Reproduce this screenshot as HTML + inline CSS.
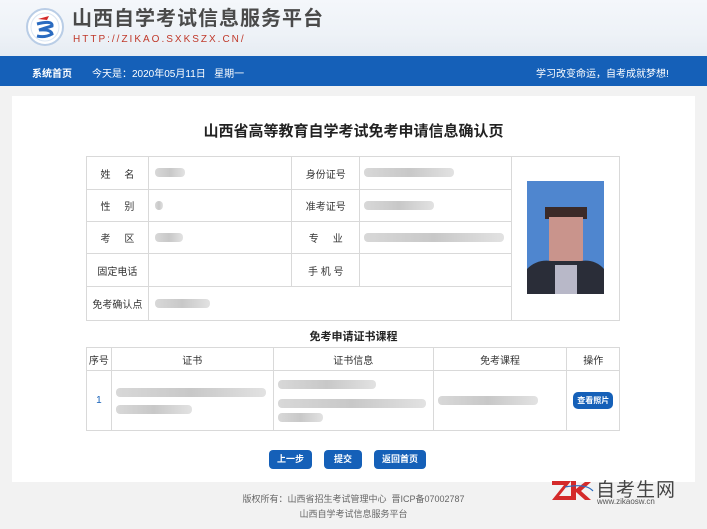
<!DOCTYPE html>
<html><head><meta charset="utf-8"><style>
*{margin:0;padding:0;box-sizing:border-box}
body{width:707px;height:529px;background:#f2f2f2;font-family:"Liberation Sans","Noto Sans CJK SC",sans-serif;position:relative;overflow:hidden;color:#333}
.hdr{position:absolute;left:0;top:0;width:707px;height:56px;background:linear-gradient(180deg,#f4f7fb 0%,#eef2f7 60%,#e6ecf3 100%)}
.nav{position:absolute;left:0;top:56px;width:707px;height:30px;background:#1560b8;color:#fff;font-size:10px}
.panel{position:absolute;left:12px;top:96px;width:683px;height:386px;background:#fff}
.abs{position:absolute}
table{border-collapse:collapse;position:absolute;font-size:10px}
td,th{border:1px solid #d9d9d9}
.lbl{text-align:center;color:#333}
.bar{display:inline-block;height:9px;background:linear-gradient(90deg,#d8d8d8,#c8c8c8,#e2e2e2);border-radius:4px;vertical-align:middle}
.btn{position:absolute;top:450px;height:19px;background:#1560b8;color:#fff;font-size:9px;font-weight:bold;border-radius:4px;text-align:center;line-height:19px}
</style></head><body>
<div class="hdr">
 <svg class="abs" style="left:25px;top:7px" width="40" height="40" viewBox="0 0 40 40">
  <circle cx="20" cy="20" r="18" fill="#fff" stroke="#b9cde6" stroke-width="2"/>
  <circle cx="20" cy="20" r="14" fill="none" stroke="#dbe6f3" stroke-width="1"/>
  <path d="M13 12 L24 9 L22 13 Z" fill="#d42a2a"/>
  <path d="M12 17 Q28 13 27 19 Q20 21 14 23 Q26 22 27 27 Q20 31 12 29" fill="none" stroke="#2a6bc0" stroke-width="3"/>
 </svg>
 <div class="abs" style="left:72px;top:9px;font-size:20px;line-height:21px;font-weight:bold;color:#4a4a4a;letter-spacing:1px">山西自学考试信息服务平台</div>
 <div class="abs" style="left:73px;top:34px;font-size:10px;line-height:11px;color:#c0392b;letter-spacing:2px">HTTP://ZIKAO.SXKSZX.CN/</div>
</div>
<div class="nav">
 <span class="abs" style="left:32px;top:9px;font-weight:bold">系统首页</span>
 <span class="abs" style="left:92px;top:9px">今天是：2020年05月11日&nbsp;&nbsp;&nbsp;星期一</span>
 <span class="abs" style="left:536px;top:9px">学习改变命运，自考成就梦想!</span>
</div>
<div class="panel"></div>
<div class="abs" style="left:0;width:707px;top:120px;text-align:center;font-size:15px;font-weight:bold;color:#222">山西省高等教育自学考试免考申请信息确认页</div>
<table style="left:86px;top:156px;width:534px">
 <tr style="height:33px"><td class="lbl" style="width:62px">姓&nbsp;&nbsp;&nbsp;&nbsp;&nbsp;名</td><td style="width:144px;padding-left:6px"><span class="bar" style="width:30px"></span></td><td class="lbl" style="width:68px">身份证号</td><td style="width:152px;padding-left:4px"><span class="bar" style="width:90px"></span></td><td rowspan="5" style="width:108px;text-align:center">
  <svg width="77" height="113" viewBox="0 0 77 113"><rect width="77" height="113" fill="#4f86cf"/><rect x="18" y="26" width="42" height="12" fill="#3b2a28"/><rect x="22" y="36" width="34" height="50" fill="#c9948c"/><path d="M0 88 Q10 78 24 80 L54 80 Q68 78 77 88 L77 113 L0 113Z" fill="#2a2d38"/><rect x="28" y="84" width="22" height="29" fill="#b8b8c8"/></svg>
 </td></tr>
 <tr style="height:32px"><td class="lbl">性&nbsp;&nbsp;&nbsp;&nbsp;&nbsp;别</td><td style="padding-left:6px"><span class="bar" style="width:8px"></span></td><td class="lbl">准考证号</td><td style="padding-left:4px"><span class="bar" style="width:70px"></span></td></tr>
 <tr style="height:32px"><td class="lbl">考&nbsp;&nbsp;&nbsp;&nbsp;&nbsp;区</td><td style="padding-left:6px"><span class="bar" style="width:28px"></span></td><td class="lbl">专&nbsp;&nbsp;&nbsp;&nbsp;&nbsp;业</td><td style="padding-left:4px"><span class="bar" style="width:140px"></span></td></tr>
 <tr style="height:33px"><td class="lbl">固定电话</td><td></td><td class="lbl">手&nbsp;机&nbsp;号</td><td></td></tr>
 <tr style="height:34px"><td class="lbl">免考确认点</td><td colspan="3" style="padding-left:6px"><span class="bar" style="width:55px"></span></td></tr>
</table>
<div class="abs" style="left:0;width:707px;top:328px;text-align:center;font-size:11px;font-weight:bold;color:#222">免考申请证书课程</div>
<table style="left:86px;top:347px;width:534px">
 <tr style="height:23px"><td class="lbl" style="width:25px">序号</td><td class="lbl" style="width:162px">证书</td><td class="lbl" style="width:160px">证书信息</td><td class="lbl" style="width:134px">免考课程</td><td class="lbl" style="width:53px">操作</td></tr>
 <tr style="height:60px"><td class="lbl" style="color:#1560b8">1</td>
  <td style="padding:4px"><span class="bar" style="width:150px"></span><br><span class="bar" style="width:76px;margin-top:6px"></span></td>
  <td style="padding:4px"><span class="bar" style="width:98px"></span><br><span class="bar" style="width:148px;margin-top:8px"></span><br><span class="bar" style="width:45px;margin-top:5px"></span></td>
  <td style="padding:4px"><span class="bar" style="width:100px"></span></td>
  <td style="text-align:center"><span style="display:inline-block;background:#1560b8;color:#fff;font-size:8px;font-weight:bold;padding:3px 4px;border-radius:5px">查看照片</span></td></tr>
</table>
<div class="btn" style="left:269px;width:43px">上一步</div>
<div class="btn" style="left:324px;width:38px">提交</div>
<div class="btn" style="left:374px;width:52px">返回首页</div>
<div class="abs" style="left:0;width:707px;top:492px;text-align:center;font-size:9px;color:#666;line-height:15px">版权所有：山西省招生考试管理中心&nbsp;&nbsp;晋ICP备07002787<br>山西自学考试信息服务平台</div>
<svg class="abs" style="left:551px;top:479px" width="45" height="22" viewBox="0 0 45 22"><path d="M1 2 H20 L8 17 H20 V21 H1 L13 6 H1Z" fill="#d42a2a"/><path d="M20 2 H25 V10 L34 3 H40 L30 12 L40 21 H34 L25 13 V21 H20Z" fill="#d42a2a"/><path d="M14 8 Q35 4 42 12" fill="none" stroke="#2a6bc0" stroke-width="1.2"/></svg>
<div class="abs" style="left:596px;top:475px;font-size:19px;color:#444;letter-spacing:1px">自考生网</div>
<div class="abs" style="left:597px;top:497px;font-size:8px;color:#555">www.zikaosw.cn</div>
</body></html>
